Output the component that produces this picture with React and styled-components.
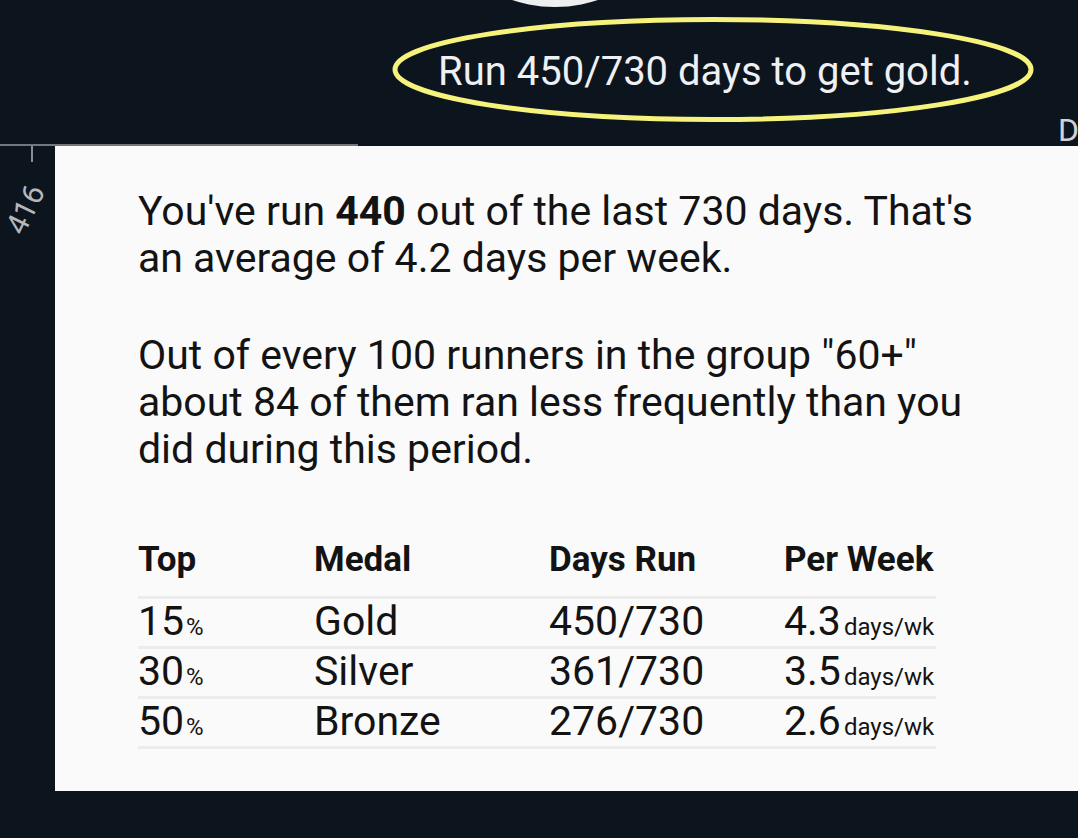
import styled, { createGlobalStyle } from "styled-components";

const GlobalStyle = createGlobalStyle`
  html, body {
    margin: 0;
    background: #0c141d;
  }
  body {
    font-family: Roboto, "Noto Sans", sans-serif;
    overflow: hidden;
  }
`;

const Page = styled.div`
  display: flex;
  flex-direction: column;
  width: 1078px;
  height: 838px;
  overflow: hidden;
`;

const Header = styled.div`
  display: flex;
  flex-direction: column;
  flex-shrink: 0;
  height: 144px;

  & > * {
    flex-shrink: 0;
  }
`;

const Avatar = styled.div`
  width: 270px;
  height: 270px;
  margin: -263px 0 0 420px;
  border-radius: 50%;
  background: #eceef0;
`;

const Title = styled.div`
  position: relative;
  align-self: flex-start;
  margin: 41px 0 0 438px;
  color: #eef0f3;
  font-size: 40px;
`;

const Ring = styled.svg`
  position: absolute;
  left: -47px;
  top: -31px;
  width: 645px;
  height: 105px;
  overflow: visible;
  pointer-events: none;
`;

const EdgeLabel = styled.div`
  margin: 21px 0 0 1058px;
  color: #cfd3d7;
  font-size: 32px;
  line-height: 28px;
  white-space: nowrap;
`;

const Rule = styled.div`
  flex-shrink: 0;
  width: 358px;
  height: 2px;
  background: #74787c;
`;

const Main = styled.div`
  display: flex;
  align-items: flex-start;
`;

const Gutter = styled.div`
  display: flex;
  flex-direction: column;
  width: 55px;
  flex-shrink: 0;
`;

const Tick = styled.div`
  width: 2px;
  height: 16px;
  margin-left: 31px;
  background: #8a8e92;
`;

const AxisLabel = styled.div`
  width: 50px;
  margin: 30px 0 0 0;
  color: #b4b8bc;
  font-size: 30px;
  text-align: center;
  transform: rotate(-64deg);
  transform-origin: center;
`;

const Card = styled.div`
  flex: 1;
  background: #fafafa;
  padding: 42px 0 42px 83px;
  color: #131313;
`;

const Text = styled.p`
  margin: 0 0 50px;
  max-width: 860px;
  font-size: 41px;
  line-height: 47px;

  b {
    font-weight: 700;
  }
`;

const Table = styled.div`
  width: 798px;
  margin-top: 67px;
`;

const Row = styled.div`
  display: grid;
  grid-template-columns: 176px 235px 235px 152px;
  align-items: baseline;
  box-sizing: border-box;
  height: ${(p) => (p.$head ? "59px" : "50px")};
  border-bottom: 3px solid #ececec;
  font-size: ${(p) => (p.$head ? "35px" : "41px")};
  font-weight: ${(p) => (p.$head ? 700 : 400)};
  line-height: ${(p) => (p.$head ? "40px" : "45px")};
  white-space: nowrap;
`;

const Unit = styled.span`
  font-size: 24px;
  margin-left: ${(p) => p.$gap || "2px"};
`;

const medals = [
  { top: 15, name: "Gold", days: "450/730", week: "4.3" },
  { top: 30, name: "Silver", days: "361/730", week: "3.5" },
  { top: 50, name: "Bronze", days: "276/730", week: "2.6" },
];

export default function App() {
  return (
    <Page>
      <GlobalStyle />
      <Header>
        <Avatar />
        <Title>
          Run 450/730 days to get gold.
          <Ring viewBox="0 0 645 105">
            <ellipse
              cx="322"
              cy="52.5"
              rx="318"
              ry="50"
              fill="none"
              stroke="#f6f37c"
              strokeWidth="5"
            />
          </Ring>
        </Title>
        <EdgeLabel>D</EdgeLabel>
      </Header>
      <Rule />
      <Main>
        <Gutter>
          <Tick />
          <AxisLabel>416</AxisLabel>
        </Gutter>
        <Card>
          <Text>
            You've run <b>440</b> out of the last 730 days. That's an average
            of 4.2 days per week.
          </Text>
          <Text>
            Out of every 100 runners in the group "60+" about 84 of them ran
            less frequently than you did during this period.
          </Text>
          <Table>
            <Row $head>
              <span>Top</span>
              <span>Medal</span>
              <span>Days Run</span>
              <span>Per Week</span>
            </Row>
            {medals.map((m) => (
              <Row key={m.name}>
                <span>
                  {m.top}
                  <Unit>%</Unit>
                </span>
                <span>{m.name}</span>
                <span>{m.days}</span>
                <span>
                  {m.week}
                  <Unit $gap="3px">days/wk</Unit>
                </span>
              </Row>
            ))}
          </Table>
        </Card>
      </Main>
    </Page>
  );
}
